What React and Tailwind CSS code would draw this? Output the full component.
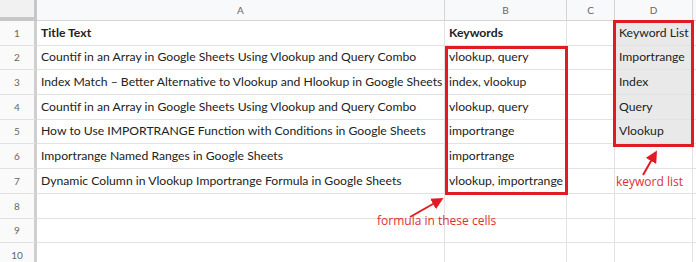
import React from 'react';

const cols = [
  { key: 'A', w: 'w-[408px]' },
  { key: 'B', w: 'w-[122px]' },
  { key: 'C', w: 'w-[48px]' },
  { key: 'D', w: 'w-[78px]' },
  { key: '', w: 'w-[10px]' },
];

const rows = [
  { n: 1, h: 'h-[25px]', a: 'Title Text', b: 'Keywords', d: 'Keyword List', bold: true },
  { n: 2, h: 'h-[24px]', a: 'Countif in an Array in Google Sheets Using Vlookup and Query Combo', b: 'vlookup, query', d: 'Importrange' },
  { n: 3, h: 'h-[25px]', a: 'Index Match – Better Alternative to Vlookup and Hlookup in Google Sheets', b: 'index, vlookup', d: 'Index' },
  { n: 4, h: 'h-[25px]', a: 'Countif in an Array in Google Sheets Using Vlookup and Query Combo', b: 'vlookup, query', d: 'Query' },
  { n: 5, h: 'h-[24px]', a: 'How to Use IMPORTRANGE Function with Conditions in Google Sheets', b: 'importrange', d: 'Vlookup' },
  { n: 6, h: 'h-[25px]', a: 'Importrange Named Ranges in Google Sheets', b: 'importrange', d: '' },
  { n: 7, h: 'h-[25px]', a: 'Dynamic Column in Vlookup Importrange Formula in Google Sheets', b: 'vlookup, importrange', d: '' },
  { n: 8, h: 'h-[25px]', a: '', b: '', d: '' },
  { n: 9, h: 'h-[24px]', a: '', b: '', d: '' },
  { n: 10, h: 'h-[25px]', a: '', b: '', d: '' },
];

const Cell = ({ w, children, bold, shaded }) => (
  <div
    className={`${w} shrink-0 h-full border-r border-b border-[#e2e2e2] px-[4px] flex items-center overflow-hidden whitespace-nowrap text-[12.2px] text-[#222] ${
      bold ? 'font-bold' : ''
    } ${shaded ? 'bg-[#e9e9e9]' : 'bg-white'}`}
  >
    {children}
  </div>
);

export default function App() {
  return (
    <div className="relative w-[696px] h-[262px] overflow-hidden bg-white font-['Lato',sans-serif]">
      {/* column headers */}
      <div className="flex h-[21px]">
        <div className="w-[37px] shrink-0 bg-[#f1f1f1] border-r-[3px] border-b-[4px] border-[#c7c7c7]" />
        {cols.map((c, i) => (
          <div
            key={i}
            className={`${c.w} shrink-0 bg-[#f8f9fa] border-r border-b border-[#d4d4d4] flex items-center justify-center text-[10px] text-[#666]`}
          >
            {c.key}
          </div>
        ))}
      </div>

      {/* rows */}
      {rows.map((r) => (
        <div key={r.n} className={`flex ${r.h}`}>
          <div className="w-[37px] shrink-0 h-full bg-[#fafafa] border-r-[3px] border-b border-r-[#cfcfcf] border-b-[#e2e2e2] flex items-center justify-center text-[10px] text-[#666]">
            {r.n}
          </div>
          <Cell w="w-[408px]" bold={r.bold}>{r.a}</Cell>
          <Cell w="w-[122px]" bold={r.bold}>{r.b}</Cell>
          <Cell w="w-[48px]" />
          <Cell w="w-[78px]" shaded={r.n <= 5}>{r.d}</Cell>
          <Cell w="w-[10px]" />
        </div>
      ))}

      {/* red boxes */}
      <div className="absolute left-[445px] top-[46px] w-[123px] h-[149px] border-[3px] border-[#e01b24]" />
      <div className="absolute left-[613px] top-[20px] w-[81px] h-[127px] border-[3px] border-[#e01b24]" />

      {/* annotations */}
      <svg className="absolute left-0 top-0" width="696" height="262">
        <defs>
          <marker id="ah" markerWidth="6" markerHeight="6" refX="4" refY="3" orient="auto">
            <path d="M0,0 L6,3 L0,6 z" fill="#e01b24" />
          </marker>
        </defs>
        <line x1="410" y1="217" x2="440" y2="200" stroke="#e01b24" strokeWidth="2" markerEnd="url(#ah)" />
        <line x1="643" y1="175" x2="655" y2="154" stroke="#e01b24" strokeWidth="2" markerEnd="url(#ah)" />
      </svg>
      <div className="absolute left-[377px] top-[215px] text-[12px] leading-none text-[#e0302e] font-['Open_Sans',sans-serif]">
        formula in these cells
      </div>
      <div className="absolute left-[616px] top-[176px] text-[12px] leading-none text-[#e0302e] font-['Open_Sans',sans-serif]">
        keyword list
      </div>
    </div>
  );
}
